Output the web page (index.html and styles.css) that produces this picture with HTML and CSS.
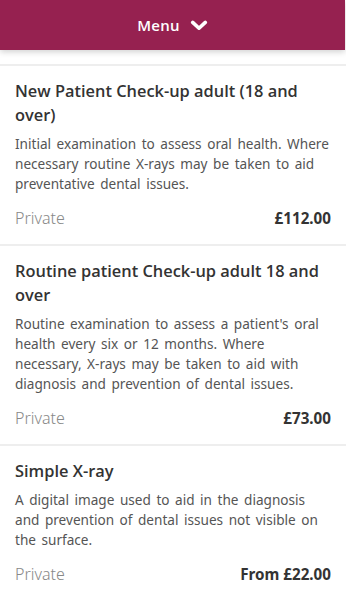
FILE: index.html
```html
<!DOCTYPE html>
<html lang="en">
  <head>
    <meta charset="UTF-8" />
    <meta name="viewport" content="width=device-width, initial-scale=1.0" />
    <title>Treatments and prices</title>
    <link rel="stylesheet" href="styles.css">
  </head>
  <body>
    <header class="menu-bar">
      <button class="menu-toggle" aria-expanded="false">
        Menu
        <svg class="chevron" viewBox="0 0 20 12" width="18" height="11" aria-hidden="true">
          <path d="M3 2.5 L10 9 L17 2.5" fill="none" stroke="#fff" stroke-width="4" stroke-linecap="round" stroke-linejoin="round" />
        </svg>
      </button>
    </header>

    <ul class="price-list">
      <li class="price-item">
        <h3 class="price-title">New Patient Check-up adult (18 and over)</h3>
        <p class="price-desc">Initial examination to assess oral health. Where necessary routine X-rays may be taken to aid preventative dental issues.</p>
        <div class="price-row">
          <span class="price-type">Private</span>
          <span class="price-amount">£112.00</span>
        </div>
      </li>
      <li class="price-item">
        <h3 class="price-title">Routine patient Check-up adult 18 and over</h3>
        <p class="price-desc">Routine examination to assess a patient's oral health every six or 12 months. Where necessary, X-rays may be taken to aid with diagnosis and prevention of dental issues.</p>
        <div class="price-row">
          <span class="price-type">Private</span>
          <span class="price-amount">£73.00</span>
        </div>
      </li>
      <li class="price-item">
        <h3 class="price-title">Simple X-ray</h3>
        <p class="price-desc">A digital image used to aid in the diagnosis and prevention of dental issues not visible on the surface.</p>
        <div class="price-row">
          <span class="price-type">Private</span>
          <span class="price-amount">From £22.00</span>
        </div>
      </li>
    </ul>
  </body>
</html>
```

FILE: styles.css
```css
body {
  font-family: 'Noto Sans', 'Open Sans', sans-serif;
  margin: 0;
  background: #fff;
  color: #333;
}
/* Top menu bar */
.menu-bar {
  background-color: #962150;
  height: 50px;
  width: 345px;
  display: flex;
  justify-content: center;
  align-items: center;
  box-shadow: 0 2px 6px rgba(0, 0, 0, 0.18);
}
.menu-toggle {
  background: none;
  border: none;
  color: #fff;
  font-family: 'Open Sans', sans-serif;
  font-size: 15px;
  font-weight: 600;
  letter-spacing: 0.3px;
  display: flex;
  align-items: center;
  gap: 10px;
  padding: 0;
}
/* Price list */
.price-list {
  list-style: none;
  margin: 14px 0 0;
  padding: 0;
  border-top: 2px solid #eee;
}
.price-item {
  padding: 13px 15px 14px;
  border-bottom: 2px solid #eee;
}
.price-item:last-child {
  border-bottom: none;
}
.price-title {
  margin: 0 0 7px;
  font-family: 'Open Sans', sans-serif;
  font-size: 16.4px;
  font-weight: 600;
  line-height: 24px;
  color: #333;
}
.price-desc {
  margin: 0 0 12px;
  font-size: 13.6px;
  word-spacing: 2px;
  line-height: 20px;
  color: #555;
}
.price-row {
  display: flex;
  justify-content: space-between;
  align-items: center;
  line-height: 24px;
}
.price-type {
  font-size: 16px;
  font-weight: 300;
  color: #888;
}
.price-amount {
  font-size: 15.2px;
  font-weight: 700;
  color: #333;
}
```
